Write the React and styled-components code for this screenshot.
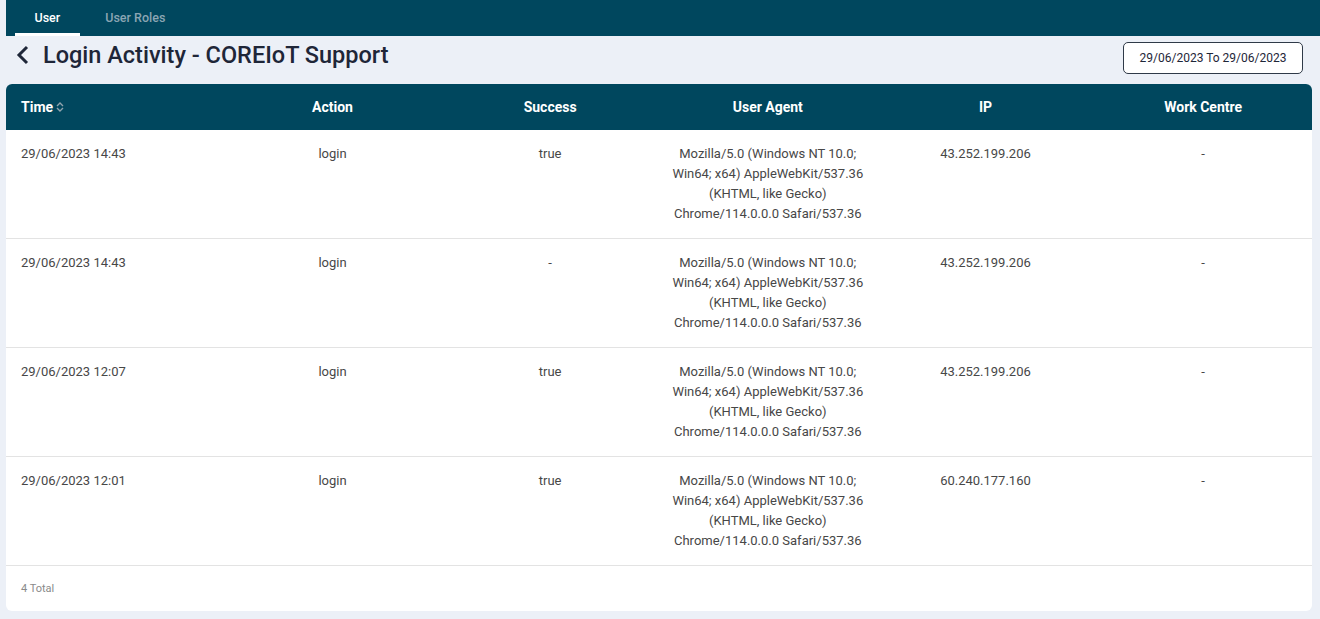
import React from 'react';
import styled, { createGlobalStyle } from 'styled-components';

const GlobalStyle = createGlobalStyle`
  html, body {
    margin: 0;
    padding: 0;
    background: #ecf0f7;
    font-family: Roboto, "Liberation Sans", sans-serif;
  }
`;

const Page = styled.div`
  padding: 0 8px 8px 6px;
  min-height: 619px;
  box-sizing: border-box;
`;

const TabBar = styled.div`
  display: flex;
  height: 36px;
  background: #00475e;
  margin-right: -8px;
  padding-left: 9px;
  gap: 6px;
`;

const Tab = styled.div`
  display: flex;
  align-items: center;
  justify-content: center;
  padding: 1px 19.5px 0;
  font-size: 12.5px;
  font-weight: 500;
  color: ${p => (p.active ? '#ffffff' : '#8aa5b3')};
  border-bottom: 3px solid ${p => (p.active ? '#ffffff' : 'transparent')};
  box-sizing: border-box;
`;

const TitleRow = styled.div`
  display: flex;
  align-items: center;
  justify-content: space-between;
  height: 48px;
`;

const Title = styled.h1`
  display: flex;
  align-items: center;
  gap: 13px;
  margin: 0 0 11px 10px;
  font-size: 23.5px;
  font-weight: 500;
  color: #1e2638;
`;

const DateButton = styled.button`
  width: 180px;
  height: 32px;
  margin-right: 9px;
  margin-bottom: 4px;
  border: 1px solid #2f3a48;
  border-radius: 5px;
  background: #fff;
  font-family: Roboto, "Liberation Sans", sans-serif;
  font-size: 12px;
  color: #1e2638;
`;

const Card = styled.div`
  background: #fff;
  border-radius: 6px;
  overflow: hidden;
`;

const Table = styled.table`
  width: 100%;
  border-collapse: collapse;
  table-layout: fixed;
`;

const Th = styled.th`
  height: 46px;
  padding: 0 15px;
  background: #00475e;
  color: #fff;
  font-size: 14px;
  font-weight: 700;
  text-align: ${p => (p.left ? 'left' : 'center')};
`;

const Td = styled.td`
  padding: 14px ${p => (p.left ? '15px' : '8px')} 14px;
  font-size: 13px;
  line-height: 20px;
  color: #474747;
  vertical-align: top;
  text-align: ${p => (p.left ? 'left' : 'center')};
  border-bottom: 1px solid #e3e3e3;
`;

const SortIcon = styled.svg`
  margin-left: 3px;
  vertical-align: -1px;
`;

const Footer = styled.div`
  height: 45px;
  display: flex;
  align-items: center;
  padding-left: 15px;
  font-size: 11px;
  color: #8a8a8a;
`;

const ua = 'Mozilla/5.0 (Windows NT 10.0; Win64; x64) AppleWebKit/537.36 (KHTML, like Gecko) Chrome/114.0.0.0 Safari/537.36';

const rows = [
  { time: '29/06/2023 14:43', action: 'login', success: 'true', ip: '43.252.199.206' },
  { time: '29/06/2023 14:43', action: 'login', success: '-', ip: '43.252.199.206' },
  { time: '29/06/2023 12:07', action: 'login', success: 'true', ip: '43.252.199.206' },
  { time: '29/06/2023 12:01', action: 'login', success: 'true', ip: '60.240.177.160' },
];

export default function App() {
  return (
    <Page>
      <GlobalStyle />
      <TabBar>
        <Tab active>User</Tab>
        <Tab>User Roles</Tab>
      </TabBar>
      <TitleRow>
        <Title>
          <svg width="14" height="20" viewBox="0 0 14 20">
            <path d="M11 2 L3 10 L11 18" fill="none" stroke="#1e2638" strokeWidth="3" />
          </svg>
          Login Activity - COREIoT Support
        </Title>
        <DateButton>29/06/2023 To 29/06/2023</DateButton>
      </TitleRow>
      <Card>
        <Table>
          <thead>
            <tr>
              <Th left>
                Time
                <SortIcon width="8" height="12" viewBox="0 0 8 12">
                  <path d="M1 5 L4 2 L7 5 M1 7 L4 10 L7 7" fill="none" stroke="#8fa3ad" strokeWidth="1.4" />
                </SortIcon>
              </Th>
              <Th>Action</Th>
              <Th>Success</Th>
              <Th>User Agent</Th>
              <Th>IP</Th>
              <Th>Work Centre</Th>
            </tr>
          </thead>
          <tbody>
            {rows.map((r, i) => (
              <tr key={i}>
                <Td left>{r.time}</Td>
                <Td>{r.action}</Td>
                <Td>{r.success}</Td>
                <Td>{ua}</Td>
                <Td>{r.ip}</Td>
                <Td>-</Td>
              </tr>
            ))}
          </tbody>
        </Table>
        <Footer>4 Total</Footer>
      </Card>
    </Page>
  );
}
